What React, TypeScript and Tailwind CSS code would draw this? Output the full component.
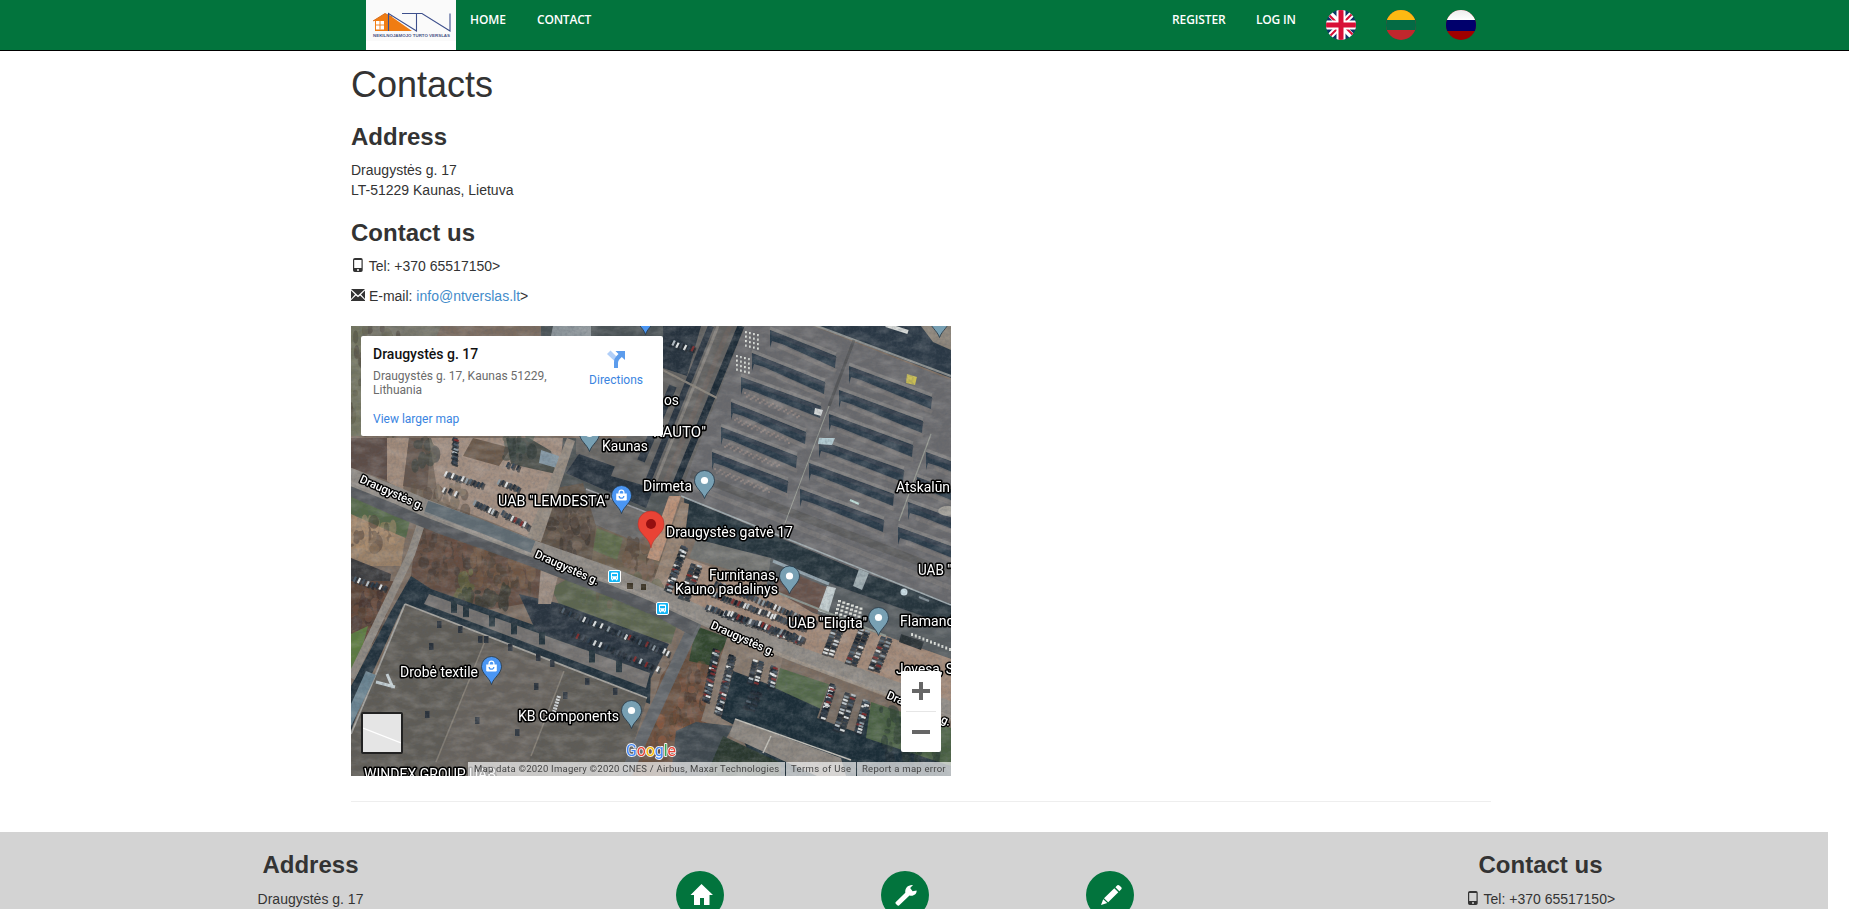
import React from "react";

type Pt = [number, number];

function makeRandom(seed: number) {
  let s = seed * 7919;
  return () => {
    s = (s * 16807) % 2147483647;
    return s / 2147483647;
  };
}

const carColors = ["#e4e7e8", "#1d2831", "#b9c2c8", "#2c3a49", "#151e26", "#dfe2e2", "#3c4753", "#202b35", "#8a979f", "#26333f", "#4c5b69", "#7c2a2c"];

function CarRow({ from, to, n, seed, lean = 5 }: { from: Pt; to: Pt; n: number; seed: number; lean?: number }) {
  const rnd = makeRandom(seed);
  return (
    <g>
      {Array.from({ length: n }, (_, i) => {
        const t = i / (n - 1);
        const x = from[0] + (to[0] - from[0]) * t;
        const y = from[1] + (to[1] - from[1]) * t + rnd() * 1.5;
        const c = carColors[Math.floor(rnd() * carColors.length)];
        return (
          <g key={i}>
            <line x1={x + 1.4} y1={y + 1} x2={x + 1.6 - lean / 2} y2={y + 7} stroke="#20272d" strokeWidth="2.6" opacity="0.7" />
            <line x1={x} y1={y} x2={x - lean / 2} y2={y + 5} stroke={c} strokeWidth="2.2" />
          </g>
        );
      })}
    </g>
  );
}

/* A lot lane with cars parked sideways on both sides. */
function CarLane({ from, to, n, seed, gap = 6 }: { from: Pt; to: Pt; n: number; seed: number; gap?: number }) {
  const rnd = makeRandom(seed);
  return (
    <g>
      {Array.from({ length: n * 2 }, (_, i) => {
        const t = Math.floor(i / 2) / (n - 1);
        const x = from[0] + (to[0] - from[0]) * t + (i % 2) * gap;
        const y = from[1] + (to[1] - from[1]) * t + (i % 2) * 1.5;
        const c = carColors[Math.floor(rnd() * carColors.length)];
        return (
          <g key={i}>
            <line x1={x - 1} y1={y + 1.4} x2={x + 5} y2={y + 3.6} stroke="#1d262d" strokeWidth="2.6" opacity="0.75" />
            <line x1={x} y1={y} x2={x + 4.6} y2={y + 1.6} stroke={c} strokeWidth="2.1" />
          </g>
        );
      })}
    </g>
  );
}

function Trees({ x, y, w, h, n, seed, colors }: { x: number; y: number; w: number; h: number; n: number; seed: number; colors: string[] }) {
  const rnd = makeRandom(seed);
  return (
    <g opacity="0.5">
      {Array.from({ length: n }, (_, i) => (
        <ellipse
          key={i}
          cx={x + rnd() * w}
          cy={y + rnd() * h}
          rx={1.5 + rnd() * 4}
          ry={2 + rnd() * 7}
          fill={colors[Math.floor(rnd() * colors.length)]}
        />
      ))}
    </g>
  );
}

const slots: [number, number, number, number][] = [
  [419, 4, 485, 30], [401, 27, 474, 56], [390, 51, 470, 80], [380, 76, 455, 106], [370, 101, 446, 130], [361, 126, 437, 155],
  [498, 40, 581, 71], [488, 64, 572, 95], [478, 88, 562, 119], [468, 114, 553, 144], [458, 137, 543, 168], [449, 163, 533, 194],
  [575, 126, 640, 150], [566, 151, 640, 178], [557, 176, 640, 206], [547, 201, 630, 231],
];

function Imagery() {
  return (
    <g>
      <rect width="600" height="450" fill="#7b6c60" />
      <g filter="url(#soft)">
        <polygon points="0,0 90,0 70,45 0,110" fill="#77766a" />
        <rect x="0" y="0" width="12" height="110" fill="#737560" />
        <path d="M190 0H330V16H190Z" fill="#4b5357" />
        <path d="M202 0H240V10H200Z" fill="#8e979c" />
        <Trees x={0} y={0} w={60} h={110} n={40} seed={11} colors={["#4f4c3d", "#5d5b47", "#453c36"]} />
        <polygon points="0,112 36,112 38,155 0,142" fill="#5d4d47" />
        <polygon points="36,112 58,112 52,165 36,155" fill="#a08a7a" />
        <polygon points="58,112 80,112 76,165 52,160" fill="#65564d" />
        <polygon points="78,112 212,112 205,180 180,212 88,175" fill="#a28e80" />
        <polygon points="122,112 160,122 148,140 112,130" fill="#6b594a" />
        <polygon points="155,112 178,112 200,125 205,148 160,138" fill="#4b4f4a" />
        <polygon points="190,124 208,130 206,142 188,137" fill="#8296a3" />
        <Trees x={64} y={112} w={20} h={28} n={22} seed={5} colors={["#34423c", "#555144", "#2c3739"]} />
        <Trees x={155} y={108} w={26} h={24} n={22} seed={15} colors={["#24332f", "#344a42", "#3b4844"]} />
        <Trees x={55} y={160} w={60} h={28} n={30} seed={25} colors={["#655747", "#4f4238", "#75695a"]} />
        <polygon points="212,112 330,112 328,170 290,215 206,200" fill="#505457" />
        <polygon points="225,112 300,112 300,155 225,128" fill="#686663" />
        <polygon points="228,128 305,155 295,182 215,147" fill="#27323e" />
        <polygon points="235,163 300,188 292,222 228,190" fill="#6b6968" />
        <line x1="235" y1="163" x2="300" y2="188" stroke="#9b9da0" strokeWidth="1.5" />
        <polygon points="228,192 300,222 318,235 290,262 240,240" fill="#6d6050" />
        <polygon points="246,202 272,212 266,234 242,224" fill="#5f6c4c" />
        <polygon points="205,162 232,157 245,200 240,240 186,218" fill="#5f5247" />
        <Trees x={196} y={165} w={42} h={65} n={50} seed={28} colors={["#362e2a", "#4f4339", "#7a6657"]} />
        <Trees x={275} y={215} w={34} h={40} n={35} seed={29} colors={["#74594a", "#4c3d33", "#836858"]} />
        <polygon points="216,112 224,115 190,216 176,211" fill="#958b80" />

        <polygon points="345,0 395,0 330,170 260,150 300,50" fill="#636260" />
        <polygon points="312,0 350,0 336,50 312,42" fill="#26323d" />
        <line x1="360" y1="0" x2="293" y2="165" stroke="#2a3541" strokeWidth="6" />
        <line x1="390" y1="0" x2="322" y2="165" stroke="#1d2935" strokeWidth="7" />
        <line x1="367" y1="0" x2="302" y2="162" stroke="#837f7a" strokeWidth="3" />
        <line x1="379" y1="0" x2="312" y2="162" stroke="#6b635e" strokeWidth="5" />
        <line x1="322" y1="60" x2="290" y2="135" stroke="#2b3641" strokeWidth="8" />
        <line x1="300" y1="38" x2="366" y2="72" stroke="#8b857c" strokeWidth="2" />

        <polygon points="394,0 462,0 600,54 600,280 509,245 328,170" fill="#6b6b6d" />
        <line x1="340" y1="148" x2="600" y2="248" stroke="#595859" strokeWidth="8" opacity="0.8" />
        <line x1="336" y1="158" x2="600" y2="262" stroke="#7d7b7a" strokeWidth="5" opacity="0.8" />
        {slots.map(([x1, y1, x2, y2], i) => (
          <g key={i}>
            <polygon points={`${x1},${y1} ${x2},${y2} ${x2 - 1},${y2 + 12} ${x1 + 12},${y1 + 14} ${x1 + 2},${y1 + 11} ${x1},${y1 + 18}`} fill="#2b3a48" />
            <line x1={x1 + 2} y1={y1 + 3} x2={x2} y2={y2 + 3} stroke="#3e4852" strokeWidth="4" opacity="0.7" />
            <line x1={x1} y1={y1 - 2} x2={x2} y2={y2 - 2} stroke="#8a8887" strokeWidth="3" opacity="0.7" />
            <line x1={x1 + 8} y1={y1 + 16} x2={x2} y2={y2 + 15} stroke="#817d79" strokeWidth="4" opacity="0.6" />
          </g>
        ))}
        <polygon points="480,0 600,0 600,52 466,0" fill="#2b3944" />
        <line x1="450" y1="-6" x2="600" y2="50" stroke="#8d9190" strokeWidth="2" />
        <line x1="535" y1="-1" x2="557" y2="6" stroke="#d8dbd9" strokeWidth="4" />
        <polygon points="570,0 600,0 600,24 582,16" fill="#8b8378" />
        <line x1="503" y1="14" x2="478" y2="80" stroke="#4c4f50" strokeWidth="3" opacity="0.7" />
        <line x1="478" y1="80" x2="434" y2="197" stroke="#989c94" strokeWidth="1" />
        <line x1="580" y1="108" x2="548" y2="195" stroke="#989c94" strokeWidth="1.2" />
        <polygon points="468,112 484,112 481,119 467,118" fill="#b3cbd2" />
        <polygon points="464,82 472,84 470,90 463,88" fill="#d3d7d7" />
        <polygon points="556,48 566,51 564,59 555,57" fill="#c9bd52" />
        <line x1="499" y1="174" x2="508" y2="178" stroke="#bfe0db" strokeWidth="2" />
        <ellipse cx="597" cy="185" rx="10" ry="5" fill="#a4a19a" />

        <polygon points="333,172 509,245 600,278 600,312 486,268 420,240 335,210" fill="#28343e" />
        <line x1="330" y1="170" x2="600" y2="279" stroke="#a2adb1" strokeWidth="1.5" />
        <polygon points="318,170 330,170 315,215 308,235 296,232" fill="#b99077" />
        <polygon points="330,176 338,178 330,240 316,262 300,262" fill="#94806f" />
        <polygon points="345,213 420,232 418,255 338,232" fill="#72736f" />
        <polygon points="420,232 486,260 600,300 600,333 535,310 462,287 415,262" fill="#575c5f" />
        <polygon points="432,243 478,262 466,288 420,266" fill="#68534c" />
        <polygon points="476,260 485,262 477,288 467,285" fill="#c3ced0" />
        <polygon points="508,243 518,247 511,264 502,260" fill="#9fadb1" />
        <line x1="422" y1="235" x2="478" y2="258" stroke="#8ea0aa" strokeWidth="3" />
        <circle cx="553" cy="266" r="3.5" fill="#c9dde5" />
        <line x1="568" y1="271" x2="578" y2="275" stroke="#75858e" strokeWidth="2" />

        <polygon points="335,232 420,262 462,287 535,310 600,333 600,385 450,330 300,272 316,250" fill="#a18877" />
        <line x1="415" y1="262" x2="535" y2="310" stroke="#8c958f" strokeWidth="2" />

        <polygon points="0,165 60,190 55,212 0,190" fill="#55694a" />
        <polygon points="0,188 54,212 50,240 0,240" fill="#9a8168" />
        <Trees x={-3} y={194} w={46} h={30} n={40} seed={8} colors={["#b39272", "#4f4138", "#b28e68", "#6d5846"]} />
        <polygon points="0,232 40,248 38,262 0,255" fill="#3b3a3c" />
        <polygon points="66,200 186,225 200,250 190,275 130,285 58,266" fill="#634e42" />
        <Trees x={70} y={208} w={48} h={50} n={70} seed={3} colors={["#3f3833", "#6b4e3f", "#483c34", "#664f41"]} />
        <Trees x={122} y={218} w={60} h={50} n={80} seed={4} colors={["#4b4035", "#84674d", "#6a5340", "#7b5d43"]} />
        <Trees x={104} y={244} w={16} h={28} n={18} seed={6} colors={["#75814a", "#5c6c3c"]} />
        <Trees x={108} y={264} w={50} h={16} n={30} seed={66} colors={["#1e2b2c", "#28382f"]} />
        <polygon points="0,255 44,255 35,290 0,330" fill="#5b4439" />
        <Trees x={0} y={258} w={34} h={55} n={48} seed={9} colors={["#3e302a", "#71513d", "#574332"]} />
        <polygon points="0,308 17,300 5,345 0,350" fill="#5d7b3f" />

        <polygon points="60,250 80,263 300,340 299,378 52,280 20,350 0,405 0,360 40,285" fill="#24333d" />
        <polygon points="200,262 225,248 260,256 330,285 320,318 210,282" fill="#5d6650" />
        <Trees x={225} y={250} w={85} h={30} n={30} seed={77} colors={["#67584a", "#556148"]} />
        <polygon points="168,268 210,278 318,318 300,352 185,305" fill="#2a3640" />
        <polygon points="190,240 208,246 200,278 187,278" fill="#9c8c81" />
        <polygon points="78,268 299,347 295,362 73,278" fill="#74726f" />
        {[100, 112, 138, 160, 188, 238, 265].map((x) => (
          <rect key={x} x={x} y={273 + (x - 95) * 0.36} width="6" height="12" fill="#26343e" />
        ))}
        <polygon points="54,278 296,372 285,410 268,450 0,450 0,405" fill="#5e5b57" />
        <polygon points="134,315 213,345 180,430 172,450 78,450" fill="#67635d" />
        <line x1="54" y1="278" x2="296" y2="372" stroke="#a5a39d" strokeWidth="1.8" />
        <line x1="54" y1="278" x2="0" y2="408" stroke="#a5a49f" strokeWidth="1.8" />
        <line x1="134" y1="315" x2="85" y2="436" stroke="#857f75" strokeWidth="1.5" />
        <line x1="213" y1="345" x2="180" y2="430" stroke="#857f75" strokeWidth="1.5" />
        <polygon points="15,345 25,349 5,390 0,400 0,378" fill="#6b8492" />
        <path d="M25 356L44 361M36 348L42 362" stroke="#c6d2d6" strokeWidth="3" />
        <line x1="208" y1="370" x2="203" y2="386" stroke="#d6dadb" strokeWidth="4" strokeDasharray="2 1" />
        {[[86, 295], [78, 317], [107, 300], [127, 310], [133, 310], [157, 318], [185, 328], [199, 334], [212, 366], [234, 352], [183, 357], [124, 391], [164, 403], [262, 362], [74, 385]].map(([x, y], i) => (
          <rect key={i} x={x} y={y} width="4.5" height="7" fill="#2a333b" />
        ))}

        <polygon points="345,300 385,318 360,350 350,400 340,450 280,450 310,350" fill="#6b5141" />
        <polygon points="345,300 378,312 362,340 338,335" fill="#32472f" />
        <Trees x={322} y={335} w={36} h={70} n={60} seed={19} colors={["#3e3329", "#8c5d43", "#614d38", "#744f3c"]} />
        <Trees x={300} y={385} w={55} h={40} n={45} seed={20} colors={["#a0623f", "#6b4a37", "#55432f", "#84553a"]} />
        <polygon points="378,305 432,330 425,365 375,402 350,395" fill="#87796d" />
        <polygon points="382,345 430,363 475,367 600,415 600,450 410,450 385,400 370,392" fill="#1f2d37" />
        <polygon points="429,342 480,359 474,385 424,362" fill="#53674a" />
        <polygon points="478,358 520,374 510,408 466,392" fill="#766b61" />
        <polygon points="520,376 600,402 600,440 515,412" fill="#4a6142" />
        <Trees x={530} y={375} w={60} h={65} n={50} seed={23} colors={["#1c2b2d", "#263831"]} />
        <polygon points="325,405 345,396 382,400 355,450 320,450" fill="#3f4a50" />
        <polygon points="384,393 490,432 495,450 466,450 378,410" fill="#8b857e" />
        <polygon points="372,410 430,437 430,450 355,450" fill="#29382f" />
        <line x1="384" y1="393" x2="500" y2="434" stroke="#c3c1b9" strokeWidth="1.5" />
        <line x1="420" y1="410" x2="412" y2="427" stroke="#c3c1b9" strokeWidth="1.5" />

        <polyline points="72,192 60,228 30,290 0,352" fill="none" stroke="#8f8982" strokeWidth="8" />
        <polyline points="345,296 322,345 292,410 270,460" fill="none" stroke="#62666a" strokeWidth="12" />
        <polyline points="-5,160 45,182 90,200 180,232 260,263 310,284 345,303" fill="none" stroke="#55595b" strokeWidth="16" />
        <polyline points="-5,149 45,169 75,182 180,222 260,250 300,266 360,294 450,330 522,356 605,386" fill="none" stroke="#8f8a84" strokeWidth="17" />
        <polyline points="75,181 130,200 182,221" fill="none" stroke="#606c73" strokeWidth="13" />
        <polyline points="-5,154 75,187 180,228 260,256 300,272 360,300 450,336 605,392" fill="none" stroke="#a09a92" strokeWidth="2" opacity="0.6" />
        <polyline points="375,307 450,337 600,394" fill="none" stroke="#a79a8b" strokeWidth="3" opacity="0.6" />
        <rect x="276" y="257" width="6" height="6" fill="#3a3320" />
        <rect x="290" y="258" width="5" height="6" fill="#3a3320" />

        <CarRow from={[96, 144]} to={[110, 149]} n={5} seed={31} />
        <CarRow from={[113, 150]} to={[132, 156]} n={6} seed={34} />
        <CarRow from={[149, 152]} to={[168, 160]} n={6} seed={32} />
        <CarRow from={[125, 174]} to={[146, 184]} n={8} seed={35} />
        <CarRow from={[153, 184]} to={[178, 197]} n={9} seed={36} />
        <CarLane from={[102, 112]} to={[101, 135]} n={6} seed={37} gap={1} />
        <CarRow from={[158, 135]} to={[168, 139]} n={3} seed={46} />
        <CarRow from={[94, 160]} to={[106, 165]} n={3} seed={47} />
        <CarRow from={[210, 280]} to={[318, 324]} n={32} seed={38} />
        <CarRow from={[222, 304]} to={[308, 340]} n={16} seed={39} />
        <CarRow from={[5, 250]} to={[35, 259]} n={8} seed={40} />
        <CarLane from={[330, 220]} to={[314, 262]} n={12} seed={41} gap={2} />
        <CarLane from={[340, 238]} to={[328, 270]} n={10} seed={42} gap={6} />
        <CarRow from={[362, 264]} to={[455, 299]} n={32} seed={43} />
        <CarRow from={[357, 278]} to={[450, 312]} n={32} seed={44} />
        <CarRow from={[376, 283]} to={[453, 310]} n={26} seed={48} />
        <CarRow from={[366, 254]} to={[465, 294]} n={26} seed={45} />
        <CarLane from={[482, 300]} to={[472, 326]} n={9} seed={51} />
        <CarLane from={[508, 303]} to={[495, 335]} n={11} seed={52} />
        <CarLane from={[530, 311]} to={[518, 341]} n={10} seed={53} />
        <CarLane from={[362, 323]} to={[352, 372]} n={14} seed={54} gap={2} />
        <CarLane from={[378, 329]} to={[364, 385]} n={16} seed={55} gap={2} />
        <CarLane from={[402, 334]} to={[397, 355]} n={8} seed={56} />
        <CarLane from={[420, 340]} to={[417, 358]} n={6} seed={57} gap={2} />
        <CarLane from={[400, 365]} to={[393, 380]} n={4} seed={67} />
        <CarLane from={[479, 358]} to={[469, 390]} n={11} seed={58} gap={1} />
        <CarLane from={[494, 367]} to={[483, 402]} n={12} seed={59} />
        <CarLane from={[512, 374]} to={[504, 404]} n={11} seed={60} gap={2} />
        <CarRow from={[320, 13]} to={[343, 20]} n={7} seed={63} />
        <g fill="#dfe2dc">
          {Array.from({ length: 32 }, (_, i) => (
            <rect key={i} x={394 + (i % 4) * 4 - Math.floor(i / 16) * 9} y={5 + Math.floor((i % 16) / 4) * 4.5 + (i % 4) + Math.floor(i / 16) * 24} width="1.8" height="2.2" />
          ))}
          {Array.from({ length: 24 }, (_, i) => (
            <rect key={i} x={487 + (i % 6) * 4.3 - Math.floor(i / 6)} y={274 + Math.floor(i / 6) * 4 + (i % 6) * 1.5} width="3" height="2.3" />
          ))}
          {Array.from({ length: 12 }, (_, i) => (
            <rect key={i} x={560 + i * 3.8} y={307 + i * 1.5} width="2" height="3" />
          ))}
        </g>
        <polygon points="550,308 573,316 570,324 548,316" fill="#2b3136" />
        <g fill="#ab958d" opacity="0.5">
          {Array.from({ length: 120 }, (_, i) => {
            const band = i % 4;
            const t = Math.floor(i / 4) / 29;
            return <rect key={i} x={393 - band * 10 + t * 54} y={66 + band * 25 + t * 21 + ((i * 7) % 5)} width="2" height="2" />;
          })}
        </g>
      </g>
      <rect width="600" height="450" filter="url(#grain)" opacity="0.28" />
      <rect width="600" height="450" filter="url(#mottle)" opacity="0.16" />
    </g>
  );
}

function Pin({ x, y, kind }: { x: number; y: number; kind: "dot" | "shop" }) {
  return (
    <g transform={`translate(${x} ${y})`}>
      <path
        d="M0 0C-2.200-7-10-11-10-18A10 10 0 0 1 10-18C10-11 2.200-7 0 0Z"
        fill={kind === "shop" ? "#4b96f3" : "#78a0b3"}
        stroke="#243746"
        strokeWidth="0.8"
      />
      {kind === "dot" ? (
        <circle cy="-18" r="3.6" fill="#fff" />
      ) : (
        <g>
          <path d="M-5.3-20H5.3V-14.2Q5.3-13 4.1-13H-4.1Q-5.3-13-5.3-14.2Z" fill="#fff" />
          <path d="M-2.4-19.5V-21A2.4 2.4 0 0 1 2.4-21V-19.5" fill="none" stroke="#fff" strokeWidth="1.3" />
          <path d="M-2.3-17.6A2.3 2.3 0 0 0 2.3-17.6" fill="none" stroke="#4b96f3" strokeWidth="1.3" />
        </g>
      )}
    </g>
  );
}

function Bus({ x, y }: { x: number; y: number }) {
  return (
    <g transform={`translate(${x} ${y})`}>
      <rect x="0.5" y="0.5" width="12" height="12" rx="1.5" fill="#13b5f5" stroke="#fff" />
      <path d="M3 3.4Q3 2.4 4.2 2.4H8.8Q10 2.4 10 3.4V9.4H9.2V10.6H8V9.4H5V10.6H3.8V9.4H3Z" fill="#fff" />
      <path d="M4 4H9V6.3H4ZM4 7.4H5V8.4H4ZM8 7.4H9V8.4H8Z" fill="#13b5f5" />
    </g>
  );
}

const labels: [number, number, number, string][] = [
  [313, 78, 15, "os"],
  [302, 110, 53, 'KAUTO"'],
  [251, 124, 46, "Kaunas"],
  [147, 179, 111, 'UAB "LEMDESTA"'],
  [292, 164, 49, "Dirmeta"],
  [545, 165, 54, "Atskalūn"],
  [315, 210, 127, "Draugystės gatvė 17"],
  [358, 253, 69, "Furnitanas,"],
  [324, 267, 103, "Kauno padalinys"],
  [567, 248, 42, 'UAB "V'],
  [437, 301, 79, 'UAB "Eligita"'],
  [549, 299, 62, "Flamanda"],
  [545, 347, 58, "Jovesa, S"],
  [49, 350, 78, "Drobė textile"],
  [167, 394, 101, "KB Components"],
  [13, 452, 132, "WINDEX GROUP UAB"],
];

const roads: [number, number, number][] = [
  [8, 156, 24],
  [183, 231, 24],
  [359, 302, 24],
  [535, 372, 24],
];

function MapView() {
  return (
    <div className="relative h-[450px] w-[600px] overflow-hidden bg-[#6b645c] font-['Roboto',sans-serif]">
      <svg className="block" width="600" height="450" viewBox="0 0 600 450">
        <defs>
          <filter id="soft" x="0" y="0" width="1" height="1">
            <feGaussianBlur stdDeviation="0.6" />
          </filter>
          <filter id="grain" x="0" y="0" width="1" height="1">
            <feTurbulence type="fractalNoise" baseFrequency="0.35" numOctaves="2" seed="4" />
            <feColorMatrix values="0 0 0 0 0.1  0 0 0 0 0.12  0 0 0 0 0.15  2.2 0 0 0 -0.85" />
          </filter>
          <filter id="mottle" x="0" y="0" width="1" height="1">
            <feTurbulence type="fractalNoise" baseFrequency="0.06 0.12" numOctaves="4" seed="21" />
            <feColorMatrix values="0 0 0 0 0.8  0 0 0 0 0.77  0 0 0 0 0.74  0 2.4 0 0 -0.95" />
          </filter>
        </defs>
        <Imagery />
        <Pin x={238.5} y={125.5} kind="dot" />
        <Pin x={353.5} y={172.5} kind="dot" />
        <Pin x={438.5} y={268} kind="dot" />
        <Pin x={527.5} y={309.5} kind="dot" />
        <Pin x={280.5} y={402.5} kind="dot" />
        <Pin x={588.5} y={11.5} kind="dot" />
        <Pin x={294.5} y={8.5} kind="shop" />
        <Pin x={270.5} y={187.5} kind="shop" />
        <Pin x={140.5} y={358.5} kind="shop" />
        <g fill="#fff" stroke="#000" strokeWidth="3.2" strokeLinejoin="round" paintOrder="stroke" fontSize="14">
          {labels.map(([x, y, w, text]) => (
            <text key={text} x={x} y={y + 0.5} textLength={w} lengthAdjust="spacingAndGlyphs">
              {text}
            </text>
          ))}
        </g>
        <g fill="#fff" stroke="#000" strokeWidth="2.8" strokeLinejoin="round" paintOrder="stroke" fontSize="11.5" fontWeight="500">
          {roads.map(([x, y, a]) => (
            <text key={x} transform={`translate(${x} ${y}) rotate(${a})`} textLength="69" lengthAdjust="spacingAndGlyphs">
              Draugystės g.
            </text>
          ))}
        </g>
        <Bus x={257} y={244} />
        <Bus x={305} y={276} />
        <path d="M300 222C298.500 211 287 208 287 198A13 13 0 0 1 313 198C313 208 301.500 211 300 222Z" fill="#ea4335" stroke="#b9332b" strokeWidth="0.6" />
        <circle cx="300" cy="198" r="5" fill="#950f10" />
        <g fontSize="17" stroke="#f1f1f1" strokeWidth="1.8" paintOrder="stroke" strokeLinejoin="round">
          <text x="275" y="430" textLength="50" lengthAdjust="spacingAndGlyphs">
            <tspan fill="#4285f4">G</tspan>
            <tspan fill="#ea4335">o</tspan>
            <tspan fill="#fbbc05">o</tspan>
            <tspan fill="#4285f4">g</tspan>
            <tspan fill="#34a853">l</tspan>
            <tspan fill="#ea4335">e</tspan>
          </text>
        </g>
      </svg>

      <div className="absolute left-[10px] top-[10px] flex h-[100px] w-[302px] justify-between rounded-[2px] bg-white pl-3 pr-[20px] pt-[9px]">
        <div className="flex w-[190px] flex-col">
          <div className="text-[14px] font-medium leading-[18px] text-[#111]">Draugystės g. 17</div>
          <div className="mt-[6px] text-[12px] leading-[14px] text-[#6b6b6b]">
            Draugystės g. 17, Kaunas 51229, Lithuania
          </div>
          <div className="mt-[15px] text-[12px] leading-[14px] text-[#3a84df]">View larger map</div>
        </div>
        <div className="flex flex-col items-center pt-[5px]">
          <svg width="18" height="18" viewBox="0 0 18 18">
            <path d="M0 4L3.500 0.500L10.500 7.500L8.500 12Z" fill="#b1cff8" />
            <path d="M7 18V12Q7 8.500 9.500 6L11.500 4L8.500 1H18V10L14.800 7L12.500 9.300Q11 10.800 11 13V18Z" fill="#5c9cec" />
          </svg>
          <div className="mt-[5px] text-[12px] leading-[14px] text-[#3a84df]">Directions</div>
        </div>
      </div>

      <div className="absolute left-[10px] top-[386px] h-[42px] w-[42px] rounded-[2px] border-2 border-[#222] bg-[#e5e5e5]">
        <svg width="38" height="38" viewBox="0 0 38 38">
          <path d="M0 14L38 29" stroke="#fff" strokeWidth="1.2" />
        </svg>
      </div>

      <div className="absolute left-[550px] top-[345px] flex h-[81px] w-[40px] flex-col items-center rounded-[2px] bg-white">
        <div className="flex h-[40px] items-center">
          <svg width="18" height="18" viewBox="0 0 18 18">
            <path d="M7 0H11V7H18V11H11V18H7V11H0V7H7Z" fill="#666" />
          </svg>
        </div>
        <div className="h-px w-[30px] bg-[#e6e6e6]" />
        <div className="flex h-[40px] items-center">
          <div className="h-[4px] w-[18px] bg-[#666]" />
        </div>
      </div>

      <div className="absolute bottom-0 right-0 flex h-[14px] whitespace-nowrap text-[9.5px] leading-[14px] text-[#444]">
        <div className="w-[317px] bg-[#f5f5f5]/70 pl-[6px] tracking-[0.24px]">
          Map data ©2020 Imagery ©2020 CNES / Airbus, Maxar Technologies
        </div>
        <div className="ml-px w-[70px] bg-[#f5f5f5]/70 pl-[5px] tracking-[0.35px]">Terms of Use</div>
        <div className="ml-px w-[94px] bg-[#f5f5f5]/70 pl-[5px] tracking-[0.25px]">Report a map error</div>
      </div>
    </div>
  );
}

function PhoneIcon() {
  return (
    <svg className="inline-block align-[-1px]" width="14" height="14" viewBox="0 0 14 14">
      <path
        fillRule="evenodd"
        fill="#333"
        d="M4 0H10Q11.700 0 11.700 1.700V12.300Q11.700 14 10 14H3.700Q2 14 2 12.300V1.700Q2 0 4 0ZM3.200 2V10H10.500V2ZM6 11.300V12.700H8V11.300Z"
      />
    </svg>
  );
}

function EnvelopeIcon() {
  return (
    <svg className="inline-block align-[0px]" width="14" height="12" viewBox="0 0 14 12">
      <path d="M0 0H14L7 6.500ZM0 1.600L4 5.500L0 10ZM14 1.600L10 5.500L14 10ZM0 11.300L4.900 6.400L7 8.300L9.100 6.400L14 11.300V12H0Z" fill="#333" />
    </svg>
  );
}

function Logo() {
  return (
    <svg width="90" height="50" viewBox="0 0 90 50" className="block bg-white">
      <rect width="90" height="41" fill="#fafafa" />
      <path d="M7 21L19 13.500L26 17L46 31H9V21Z" fill="#f07c12" />
      <path d="M7 21L19 13.500L26 17" fill="none" stroke="#d96f1c" strokeWidth="1" />
      <path d="M10 21H18V29.500H10Z" fill="#fff" />
      <path d="M14 21V29.500M10 25H18" stroke="#f07c12" strokeWidth="0.9" />
      <path d="M22.500 31V13.500L50.500 31V14M36 13.500H56L84 31V13.500" fill="none" stroke="#3d4f8c" strokeWidth="1.100" />
      <text x="7" y="36.700" fontSize="3.600" fontFamily="Liberation Sans, sans-serif" fontWeight="bold" fill="#4a5688" textLength="77" lengthAdjust="spacingAndGlyphs">
        NEKILNOJAMOJO TURTO VERSLAS
      </text>
    </svg>
  );
}

function UkFlag() {
  return (
    <svg width="30" height="30" viewBox="0 0 30 30" className="rounded-full">
      <rect width="30" height="30" fill="#0e3568" />
      <path d="M0 0L30 30M30 0L0 30" stroke="#fff" strokeWidth="6" />
      <path d="M-1 1L14 16M31 -1L16 14M31 29L16 14M-1 31L14 16" stroke="#d80f36" strokeWidth="2" />
      <path d="M15 0V30M0 15H30" stroke="#fff" strokeWidth="9" />
      <path d="M15 0V30M0 15H30" stroke="#d80f36" strokeWidth="5" />
    </svg>
  );
}

function Circle({ children }: { children: React.ReactNode }) {
  return (
    <div className="flex size-12 items-center justify-center rounded-full bg-[#02743d] pl-[2px]">
      <svg width="24" height="24" viewBox="0 0 24 24" fill="#fff">
        {children}
      </svg>
    </div>
  );
}

function Address() {
  return (
    <>
      <h2 className="text-[24px] font-bold leading-[26.4px]">Address</h2>
      <p className="mt-[10px]">
        Draugystės g. 17
        <br />
        LT-51229 Kaunas, Lietuva
      </p>
    </>
  );
}

function Phone() {
  return (
    <>
      <h2 className="text-[24px] font-bold leading-[26.4px]">Contact us</h2>
      <p className="mt-[10px] h-5">
        <PhoneIcon /> Tel: +370 65517150&gt;
      </p>
    </>
  );
}

export default function App() {
  return (
    <div className="flex h-[909px] w-full flex-col overflow-hidden bg-white font-['Liberation_Sans',Arial,sans-serif] text-[14px] leading-5 text-[#333]">
      <header className="h-[51px] shrink-0 border-b border-black bg-[#02743d]">
        <nav className="flex h-[50px] pl-[366px] font-['Open_Sans',sans-serif] text-[12px] font-semibold leading-5 text-white">
          <Logo />
          <div className="ml-[14px] w-[67px] pt-[10px] tracking-[-0.1px]">HOME</div>
          <div className="w-[635px] pt-[10px] tracking-[-0.2px]">CONTACT</div>
          <div className="w-[84px] pt-[10px] tracking-[-0.1px]">REGISTER</div>
          <div className="w-[70px] pt-[10px] tracking-[-0.2px]">LOG IN</div>
          <div className="flex gap-[30px] pt-[10px]">
            <UkFlag />
            <div className="flex size-[30px] flex-col overflow-hidden rounded-full bg-[#c1272d]">
              <div className="h-[10px] bg-[#fdb913]" />
              <div className="h-[10px] bg-[#046a44]" />
            </div>
            <div className="flex size-[30px] flex-col overflow-hidden rounded-full bg-[#a00000]">
              <div className="h-[10px] bg-linear-to-b from-[#ececec] to-white" />
              <div className="h-[11px] bg-[#00006c]" />
            </div>
          </div>
        </nav>
      </header>

      <main className="ml-[351px] flex w-[1140px] shrink-0 flex-col pt-[14px]">
        <h1 className="text-[36px] leading-[39.6px]">Contacts</h1>
        <div className="mt-[19px]">
          <Address />
        </div>
        <div className="mt-5">
          <Phone />
        </div>
        <p className="mt-[10px] h-5">
          <EnvelopeIcon /> E-mail: <a className="text-[#428bca]">info@ntverslas.lt</a>&gt;
        </p>
        <div className="mt-5">
          <MapView />
        </div>
        <hr className="mt-[25px] border-t border-[#eee]" />
      </main>

      <footer className="mt-[30px] flex h-[140px] w-[1828px] shrink-0 bg-[#d3d3d3] pt-[20px] text-center">
        <div className="w-[621px]">
          <Address />
        </div>
        <div className="flex w-[610px] justify-center gap-[157px] pr-[42px] pt-[19px]">
          <Circle>
            <path d="M12.500 1L24 12H20.500V22H15V15H11V22H5V12H1.500Z" />
          </Circle>
          <Circle>
            <path d="M1.600 19.200L11.300 9.700C10.700 5.300 14 1.500 19 2L16.200 5L18.600 8.300L22.600 7.400C23 10.700 19.500 13.600 15.500 12.400L5 22.400Q4 23 3 22L1.800 20.800Q1 20 1.600 19.200Z" />
          </Circle>
          <Circle>
            <path d="M2 22L4.200 16.300L8.300 20.100ZM5 15.300L15.300 5.300L19.300 9.200L9.200 19.300ZM16.400 4.200L18.300 2.300Q19.300 1.500 20.300 2.400L22.300 4.300Q23.200 5.300 22.300 6.200L20.300 8.200Z" />
          </Circle>
        </div>
        <div className="w-[597px] pl-[22px]">
          <Phone />
        </div>
      </footer>
    </div>
  );
}
